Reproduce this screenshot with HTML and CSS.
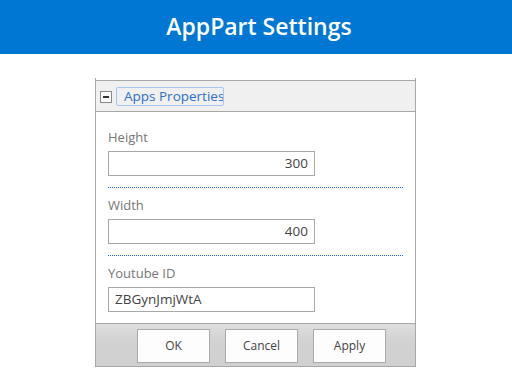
FILE: index.html
```html
<!DOCTYPE html>
<html>
<head>
<meta charset="utf-8">
<link rel="stylesheet" href="styles.css">
</head>
<body>
<header class="topbar"><h1 class="title">AppPart Settings</h1></header>
<main class="page">
  <section class="panel">
    <div class="panel-head">
      <span class="toggle"><span class="minus"></span></span>
      <span class="group-title">Apps Properties</span>
    </div>
    <div class="panel-body">
      <div class="field">
        <div class="label">Height</div>
        <div class="input num">300</div>
      </div>
      <div class="sep"></div>
      <div class="field">
        <div class="label">Width</div>
        <div class="input num">400</div>
      </div>
      <div class="sep"></div>
      <div class="field">
        <div class="label">Youtube ID</div>
        <div class="input">ZBGynJmjWtA</div>
      </div>
    </div>
    <div class="panel-foot">
      <button class="btn">OK</button>
      <button class="btn">Cancel</button>
      <button class="btn">Apply</button>
    </div>
  </section>
</main>
</body>
</html>
```
FILE: styles.css
```css
* { box-sizing: border-box; }
html, body { margin: 0; padding: 0; background: #fff; }
body { font-family: "Open Sans", "Noto Sans", sans-serif; width: 512px; height: 384px; overflow: hidden; }

.topbar {
  height: 54px;
  background: #0077d3;
  display: flex;
  align-items: center;
  justify-content: center;
}
.title {
  margin: 0;
  color: #fff;
  font-size: 23px;
  font-weight: 600;
  letter-spacing: 0;
  line-height: 28px;
  padding-bottom: 2px;
  padding-left: 6px;
}

.page { padding-top: 24px; padding-left: 95px; }

.panel {
  width: 321px;
  border-left: 1px solid #a8a8a8;
  border-right: 1px solid #a8a8a8;
  border-bottom: 1px solid #a8a8a8;
  padding-top: 2px;
  background: #fff;
}

.panel-head {
  height: 32px;
  background: #f0f0f0;
  border-top: 1px solid #a8a8a8;
  border-bottom: 1px solid #a8a8a8;
  display: flex;
  align-items: center;
  padding-left: 4px;
  gap: 4px;
}
.toggle {
  width: 12px; height: 12px;
  border: 1px solid #8a8a8a;
  background: #fafafa;
  display: flex; align-items: center; justify-content: center;
  margin-top: 1px;
}
.minus { width: 6px; height: 2px; background: #333; }
.group-title {
  border: 1px solid #a7c7f3;
  border-radius: 2px;
  height: 19px;
  padding: 0 0 0 7px;
  width: 108px;
  color: #2b6fc7;
  font-size: 13.5px;
  line-height: 17px;
  white-space: nowrap;
  overflow: hidden;
}

.panel-body { padding: 16px 12px 11px 12px; }
.label { color: #777; font-size: 13px; line-height: 18px; }
.input {
  margin-top: 5px;
  width: 207px; height: 25px;
  border: 1px solid #a8a8a8;
  font-size: 13.5px;
  line-height: 23px;
  color: #444;
  padding: 0 6px;
}
.input.num { text-align: right; }
.sep { border-top: 1px dotted #1f5fd0; margin: 11px 0 8px 0; }

.panel-foot {
  height: 43px;
  border-top: 1px solid #a8a8a8;
  background: linear-gradient(#dedede, #d2d2d2 40%, #d0d0d0);
  display: flex;
  justify-content: flex-end;
  align-items: center;
  gap: 15px;
  padding-right: 29px;
  padding-top: 1px;
}
.btn {
  width: 73px; height: 34px;
  background: #fdfdfd;
  border: 1px solid #ababab;
  font-family: "Open Sans", sans-serif;
  font-size: 12px;
  color: #444;
  padding: 0;
}
```
